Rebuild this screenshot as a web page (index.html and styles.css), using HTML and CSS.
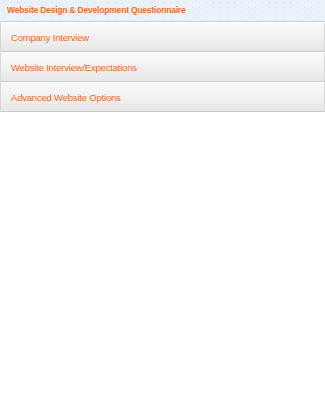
FILE: index.html
```html
<!DOCTYPE html>
<html lang="en">
  <head>
    <meta charset="UTF-8" />
    <title>Website Design &amp; Development Questionnaire</title>
    <link rel="stylesheet" href="styles.css">
  </head>
  <body>
    <div class="panel">
      <div class="panel-header">Website Design &amp; Development Questionnaire</div>
      <ul class="section-list">
        <li class="section-item">Company Interview</li>
        <li class="section-item">Website Interview/Expectations</li>
        <li class="section-item">Advanced Website Options</li>
      </ul>
    </div>
  </body>
</html>
```

FILE: styles.css
```css
* {
  margin: 0;
  padding: 0;
  box-sizing: border-box;
}

body {
  font-family: "Liberation Sans", Arial, sans-serif;
  background: #ffffff;
  width: 325px;
}

.panel {
  width: 100%;
}

/* Title strip with a faint dotted texture */
.panel-header {
  height: 22px;
  line-height: 21px;
  padding-left: 7px;
  font-size: 8.5px;
  font-weight: 700;
  letter-spacing: -0.2px;
  color: #ff6a1f;
  background-color: #e9f1f9;
  background-image: radial-gradient(circle, rgba(175, 190, 210, 0.35) 0.5px, transparent 0.8px);
  background-size: 7px 5px;
  border-bottom: 1px solid #cfcfcf;
}

.section-list {
  list-style: none;
}

.section-item {
  height: 30px;
  line-height: 29px;
  padding-left: 10px;
  font-size: 9.5px;
  letter-spacing: -0.2px;
  color: #f5672a;
  background: linear-gradient(180deg, #fafafa 0%, #f1f1f1 50%, #e6e6e6 100%);
  border-left: 1px solid #d8d8d8;
  border-right: 1px solid #d8d8d8;
  border-top: 1px solid #ffffff;
  border-bottom: 1px solid #cccccc;
}
```
